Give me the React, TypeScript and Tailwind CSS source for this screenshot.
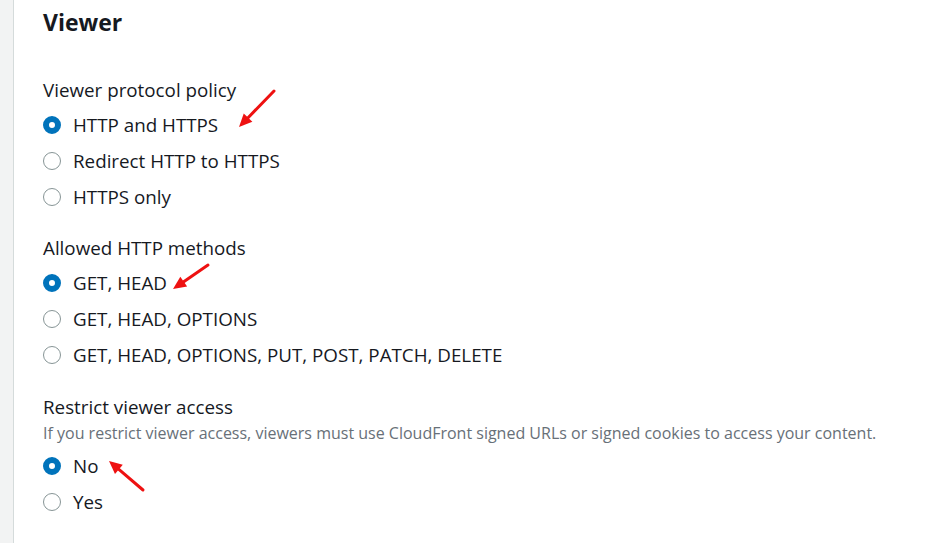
const font = { fontFamily: '"Open Sans", "Liberation Sans", sans-serif' };

function Radio({ label, checked }: { label: string; checked?: boolean }) {
  return (
    <div className="flex h-[36px] items-center">
      {checked ? (
        <span className="box-border h-[18px] w-[18px] rounded-full border-[6px] border-[#0073bb] bg-white" />
      ) : (
        <span className="box-border h-[18px] w-[18px] rounded-full border-[1.5px] border-[#879596] bg-white" />
      )}
      <span className="ml-[12px] text-[18.8px] text-[#16191f]">{label}</span>
    </div>
  );
}

function Group({
  title,
  description,
  options,
  selected,
  className,
}: {
  title: string;
  description?: string;
  options: string[];
  selected: number;
  className?: string;
}) {
  return (
    <div className={className}>
      <div className="text-[18.8px] leading-[24px] text-[#16191f]">{title}</div>
      {description && (
        <div className="mt-[4px] text-[16px] leading-[20px] text-[#687078]">{description}</div>
      )}
      <div className={description ? "mt-[5px]" : "mt-[5px]"}>
        {options.map((o, i) => (
          <Radio key={o} label={o} checked={i === selected} />
        ))}
      </div>
    </div>
  );
}

function Arrow({ x1, y1, x2, y2 }: { x1: number; y1: number; x2: number; y2: number }) {
  const a = Math.atan2(y2 - y1, x2 - x1);
  const len = 13;
  const w = 6;
  const bx = x2 - len * Math.cos(a);
  const by = y2 - len * Math.sin(a);
  const px = -Math.sin(a) * w;
  const py = Math.cos(a) * w;
  return (
    <g>
      <line x1={x1} y1={y1} x2={bx} y2={by} stroke="#ee1111" strokeWidth={3} strokeLinecap="round" />
      <polygon points={`${x2},${y2} ${bx + px},${by + py} ${bx - px},${by - py}`} fill="#ee1111" />
    </g>
  );
}

export default function App() {
  return (
    <div className="relative flex h-[543px] w-[932px] bg-white" style={font}>
      <div className="w-[14px] border-r border-[#d5dbdb] bg-[#f2f3f3]" />
      <div className="flex-1 pl-[29px] pt-[8px]">
        <h2 className="text-[23px] font-bold leading-[28px] text-[#16191f]">Viewer</h2>
        <Group
          className="mt-[42px]"
          title="Viewer protocol policy"
          options={["HTTP and HTTPS", "Redirect HTTP to HTTPS", "HTTPS only"]}
          selected={0}
        />
        <Group
          className="mt-[21px]"
          title="Allowed HTTP methods"
          options={["GET, HEAD", "GET, HEAD, OPTIONS", "GET, HEAD, OPTIONS, PUT, POST, PATCH, DELETE"]}
          selected={0}
        />
        <Group
          className="mt-[22px]"
          title="Restrict viewer access"
          description="If you restrict viewer access, viewers must use CloudFront signed URLs or signed cookies to access your content."
          options={["No", "Yes"]}
          selected={0}
        />
      </div>
      <svg className="pointer-events-none absolute left-0 top-0" width={932} height={543}>
        <Arrow x1={274} y1={91} x2={239} y2={127} />
        <Arrow x1={208} y1={265} x2={173} y2={289} />
        <Arrow x1={143} y1={490} x2={109} y2={461} />
      </svg>
    </div>
  );
}
